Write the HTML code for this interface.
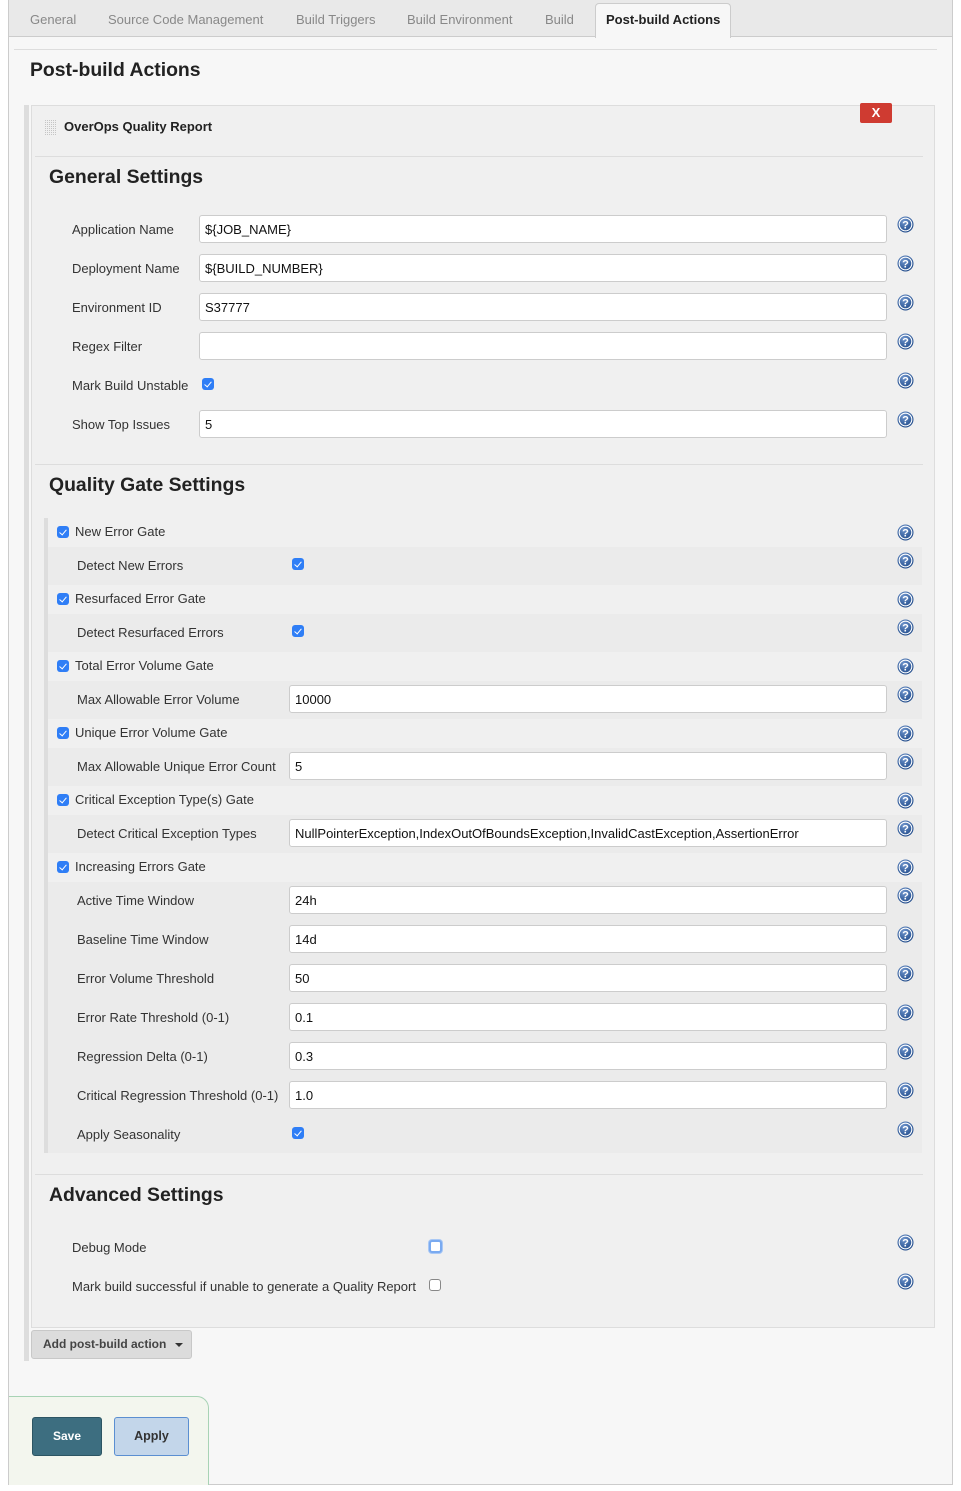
<!DOCTYPE html>
<html><head><meta charset="utf-8"><style>
*{box-sizing:border-box}
body{margin:0;width:961px;height:1491px;position:relative;background:#fff;font-family:"Liberation Sans",Arial,sans-serif;font-size:13px;color:#333;overflow:hidden}
.a{position:absolute}
.lbl{position:absolute;font-size:13px;color:#333;line-height:16px}
.inp{position:absolute;height:28px;background:#fff;border:1px solid #ccc;border-radius:3px;font-size:13px;color:#111;padding:7px 5px 5px;line-height:14px}
.cb{position:absolute;width:12px;height:12px;border-radius:3px;background:#2f7ef6}
.cb::after{content:"";position:absolute;left:4px;top:1.5px;width:3px;height:6px;border:solid #fff;border-width:0 1.5px 1.5px 0;transform:rotate(40deg)}
.cbe{position:absolute;width:12px;height:12px;border-radius:3px;background:#fff;border:1px solid #888}
.h{position:absolute;width:17px;height:17px}
h2{position:absolute;margin:0;font-size:19.4px;font-weight:bold;color:#222}
.tab{position:absolute;top:12px;font-size:13px;color:#888}
.sub{position:absolute;left:48px;width:874px;background:#ebebeb}
</style></head><body>
<div class="a" style="left:8px;top:0;width:945px;height:1485px;background:#f7f7f7;border:1px solid #ccc;border-top:none"></div>
<div class="a" style="left:9px;top:0;width:943px;height:37px;background:#e9e9e9;border-bottom:1px solid #ccc"></div>
<span class="tab" style="left:30px">General</span>
<span class="tab" style="left:108px">Source Code Management</span>
<span class="tab" style="left:296px">Build Triggers</span>
<span class="tab" style="left:407px">Build Environment</span>
<span class="tab" style="left:545px">Build</span>
<div class="a" style="left:595px;top:3px;width:136px;height:35px;background:#f7f7f7;border:1px solid #ccc;border-bottom:none;border-radius:4px 4px 0 0"></div>
<span class="tab" style="left:606px;color:#222;font-weight:bold">Post-build Actions</span>
<div class="a" style="left:14px;top:49px;width:923px;height:1px;background:#ddd"></div>
<h2 style="left:30px;top:59px">Post-build Actions</h2>

<div class="a" style="left:24px;top:105px;width:5px;height:1256px;background:#ddd"></div>
<div class="a" style="left:31px;top:105px;width:904px;height:1223px;background:#f0f0f0;border:1px solid #ddd"></div>
<div class="a" style="left:45px;top:119px;width:11px;height:17px;background:repeating-linear-gradient(90deg,#bbb 0 1px,transparent 1px 2px),#f0f0f0;opacity:.8"></div>
<div class="a" style="left:45px;top:119px;width:11px;height:17px;background:repeating-linear-gradient(0deg,#f0f0f0 0 1px,transparent 1px 2px)"></div>
<span class="lbl" style="left:64px;top:119px;font-weight:bold;color:#222">OverOps Quality Report</span>
<div class="a" style="left:860px;top:103px;width:32px;height:20px;background:#cf3b31;border-radius:2px;color:#fff;font-weight:bold;font-size:13px;text-align:center;line-height:20px">X</div>
<div class="a" style="left:35px;top:156px;width:888px;height:1px;background:#ddd"></div>
<h2 style="left:49px;top:166px">General Settings</h2>

<span class="lbl" style="left:72px;top:222px">Application Name</span><div class="inp" style="left:199px;top:215px;width:688px">${JOB_NAME}</div>
<span class="lbl" style="left:72px;top:261px">Deployment Name</span><div class="inp" style="left:199px;top:254px;width:688px">${BUILD_NUMBER}</div>
<span class="lbl" style="left:72px;top:300px">Environment ID</span><div class="inp" style="left:199px;top:293px;width:688px">S37777</div>
<span class="lbl" style="left:72px;top:339px">Regex Filter</span><div class="inp" style="left:199px;top:332px;width:688px"></div>
<span class="lbl" style="left:72px;top:378px">Mark Build Unstable</span><div class="cb" style="left:202px;top:378px"></div>
<span class="lbl" style="left:72px;top:417px">Show Top Issues</span><div class="inp" style="left:199px;top:410px;width:688px">5</div>

<div class="a" style="left:35px;top:464px;width:888px;height:1px;background:#ddd"></div>
<h2 style="left:49px;top:474px">Quality Gate Settings</h2>
<div class="a" style="left:44px;top:518px;width:4px;height:635px;background:#ddd"></div>

<div class="sub" style="top:547px;height:38px"></div>
<div class="sub" style="top:614px;height:38px"></div>
<div class="sub" style="top:681px;height:38px"></div>
<div class="sub" style="top:748px;height:38px"></div>
<div class="sub" style="top:815px;height:38px"></div>
<div class="sub" style="top:882px;height:271px"></div>

<div class="cb" style="left:57px;top:526px"></div><span class="lbl" style="left:75px;top:524px">New Error Gate</span>
<span class="lbl" style="left:77px;top:558px">Detect New Errors</span><div class="cb" style="left:292px;top:558px"></div>
<div class="cb" style="left:57px;top:593px"></div><span class="lbl" style="left:75px;top:591px">Resurfaced Error Gate</span>
<span class="lbl" style="left:77px;top:625px">Detect Resurfaced Errors</span><div class="cb" style="left:292px;top:625px"></div>
<div class="cb" style="left:57px;top:660px"></div><span class="lbl" style="left:75px;top:658px">Total Error Volume Gate</span>
<span class="lbl" style="left:77px;top:692px">Max Allowable Error Volume</span><div class="inp" style="left:289px;top:685px;width:598px">10000</div>
<div class="cb" style="left:57px;top:727px"></div><span class="lbl" style="left:75px;top:725px">Unique Error Volume Gate</span>
<span class="lbl" style="left:77px;top:759px">Max Allowable Unique Error Count</span><div class="inp" style="left:289px;top:752px;width:598px">5</div>
<div class="cb" style="left:57px;top:794px"></div><span class="lbl" style="left:75px;top:792px">Critical Exception Type(s) Gate</span>
<span class="lbl" style="left:77px;top:826px">Detect Critical Exception Types</span><div class="inp" style="left:289px;top:819px;width:598px">NullPointerException,IndexOutOfBoundsException,InvalidCastException,AssertionError</div>
<div class="cb" style="left:57px;top:861px"></div><span class="lbl" style="left:75px;top:859px">Increasing Errors Gate</span>
<span class="lbl" style="left:77px;top:893px">Active Time Window</span><div class="inp" style="left:289px;top:886px;width:598px">24h</div>
<span class="lbl" style="left:77px;top:932px">Baseline Time Window</span><div class="inp" style="left:289px;top:925px;width:598px">14d</div>
<span class="lbl" style="left:77px;top:971px">Error Volume Threshold</span><div class="inp" style="left:289px;top:964px;width:598px">50</div>
<span class="lbl" style="left:77px;top:1010px">Error Rate Threshold (0-1)</span><div class="inp" style="left:289px;top:1003px;width:598px">0.1</div>
<span class="lbl" style="left:77px;top:1049px">Regression Delta (0-1)</span><div class="inp" style="left:289px;top:1042px;width:598px">0.3</div>
<span class="lbl" style="left:77px;top:1088px">Critical Regression Threshold (0-1)</span><div class="inp" style="left:289px;top:1081px;width:598px">1.0</div>
<span class="lbl" style="left:77px;top:1127px">Apply Seasonality</span><div class="cb" style="left:292px;top:1127px"></div>

<div class="a" style="left:35px;top:1174px;width:888px;height:1px;background:#ddd"></div>
<h2 style="left:49px;top:1184px">Advanced Settings</h2>
<span class="lbl" style="left:72px;top:1240px">Debug Mode</span>
<div class="cbe" style="left:429px;top:1240px;border:2px solid #7aaaf0;box-shadow:0 0 0 1px #a9c8f5;width:13px;height:13px"></div>
<span class="lbl" style="left:72px;top:1279px">Mark build successful if unable to generate a Quality Report</span>
<div class="cbe" style="left:429px;top:1279px"></div>

<div class="a" style="left:31px;top:1330px;width:161px;height:29px;background:#dcdcdc;border:1px solid #c8c8c8;border-radius:3px;font-weight:bold;color:#444;font-size:12px;padding:6px 0 0 11px">Add post-build action</div>
<div class="a" style="left:175px;top:1343px;width:0;height:0;border-left:4px solid transparent;border-right:4px solid transparent;border-top:4px solid #333"></div>

<div class="a" style="left:9px;top:1396px;width:200px;height:89px;background:#f3f6ee;border:1px solid #a8d3b5;border-left:none;border-bottom:none;border-radius:0 12px 0 0"></div>
<div class="a" style="left:32px;top:1417px;width:70px;height:39px;background:#3d6e80;border:1px solid #2c5563;border-radius:3px;color:#fff;font-weight:bold;font-size:12px;text-align:center;line-height:37px">Save</div>
<div class="a" style="left:114px;top:1417px;width:75px;height:39px;background:#c3d6ea;border:1px solid #5b8fd1;border-radius:3px;color:#333;font-weight:bold;font-size:12.5px;text-align:center;line-height:37px">Apply</div>

<svg width="0" height="0" style="position:absolute"><defs><radialGradient id="g" cx="40%" cy="30%" r="70%"><stop offset="0" stop-color="#6f95cc"/><stop offset="1" stop-color="#1f4a8a"/></radialGradient>
<symbol id="q" viewBox="0 0 17 17"><circle cx="8.5" cy="8.5" r="8" fill="url(#g)"/><circle cx="8.5" cy="8.5" r="6.3" fill="none" stroke="#fff" stroke-width="1.1"/><text x="8.5" y="12.6" text-anchor="middle" font-family="Liberation Sans" font-weight="bold" font-size="11" fill="#fff">?</text></symbol></defs></svg>
<svg class="h" style="left:897px;top:216px"><use href="#q"/></svg>
<svg class="h" style="left:897px;top:255px"><use href="#q"/></svg>
<svg class="h" style="left:897px;top:294px"><use href="#q"/></svg>
<svg class="h" style="left:897px;top:333px"><use href="#q"/></svg>
<svg class="h" style="left:897px;top:372px"><use href="#q"/></svg>
<svg class="h" style="left:897px;top:411px"><use href="#q"/></svg>
<svg class="h" style="left:897px;top:524px"><use href="#q"/></svg>
<svg class="h" style="left:897px;top:552px"><use href="#q"/></svg>
<svg class="h" style="left:897px;top:591px"><use href="#q"/></svg>
<svg class="h" style="left:897px;top:619px"><use href="#q"/></svg>
<svg class="h" style="left:897px;top:658px"><use href="#q"/></svg>
<svg class="h" style="left:897px;top:686px"><use href="#q"/></svg>
<svg class="h" style="left:897px;top:725px"><use href="#q"/></svg>
<svg class="h" style="left:897px;top:753px"><use href="#q"/></svg>
<svg class="h" style="left:897px;top:792px"><use href="#q"/></svg>
<svg class="h" style="left:897px;top:820px"><use href="#q"/></svg>
<svg class="h" style="left:897px;top:859px"><use href="#q"/></svg>
<svg class="h" style="left:897px;top:887px"><use href="#q"/></svg>
<svg class="h" style="left:897px;top:926px"><use href="#q"/></svg>
<svg class="h" style="left:897px;top:965px"><use href="#q"/></svg>
<svg class="h" style="left:897px;top:1004px"><use href="#q"/></svg>
<svg class="h" style="left:897px;top:1043px"><use href="#q"/></svg>
<svg class="h" style="left:897px;top:1082px"><use href="#q"/></svg>
<svg class="h" style="left:897px;top:1121px"><use href="#q"/></svg>
<svg class="h" style="left:897px;top:1234px"><use href="#q"/></svg>
<svg class="h" style="left:897px;top:1273px"><use href="#q"/></svg>
</body></html>
